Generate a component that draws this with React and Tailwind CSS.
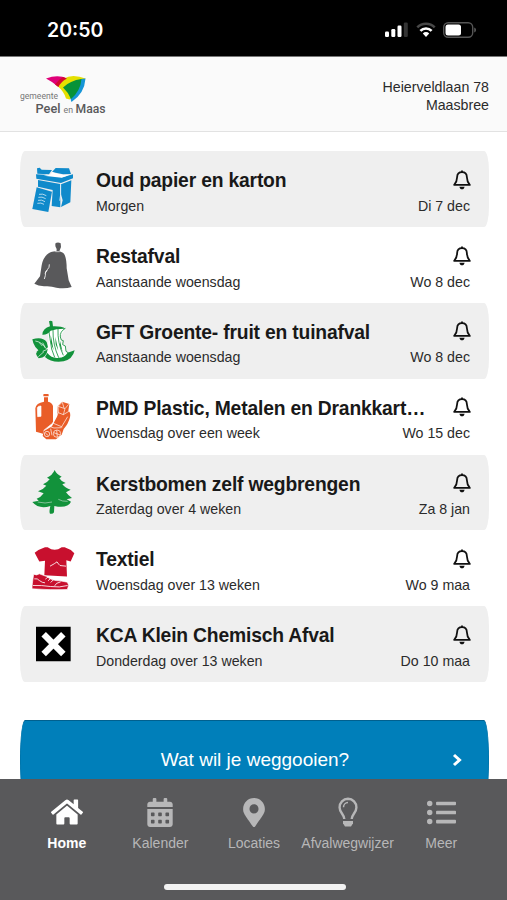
import { FaHome, FaCalendarAlt, FaMapMarkerAlt, FaListUl } from 'react-icons/fa';

function PaperIcon() {
  return (
    <svg viewBox="48 60 132 144" className="h-12 w-11">
      <g fill="#0f8acb">
        <path d="M66 70l8-2 6 6 31 1-9 13-35-2z" />
        <path d="M111 81l11-12 40 1 6 17-24 1z" />
        <path d="M63 88l26 1 52 8 33-9v12l-36 14-74-13z" />
        <path d="M69 105l67 12v70l-26-4 3-48-44-10z" />
        <path d="M138 118l31-12-3 66-28 14 5-20-5-18z" />
        <path d="M65 127l46 13-11 61-48-9z" />
      </g>
      <path d="M86 92l20-3 6-8 14 5 20 4 16 1-22 7z" fill="#fff" />
      <path
        d="M72 148q11-3 22 4M70 157q11-3 22 4M69 166q11-3 21 4M67 175q11-3 20 3M137 118v31l-3 18"
        fill="none"
        stroke="#fff"
        strokeWidth="2"
      />
    </svg>
  );
}

function BagIcon() {
  return (
    <svg viewBox="48 288 132 144" className="h-12 w-11">
      <path
        d="M122 294q8-4 15 1l1 11-5 13q13 3 17 13 5 13 5 38l6 36 9 20q-20 6-46 2-17-6-37-4-18-2-29-8l17-22 5-33q4-22 17-33 9-9 27-9 2-5 0-9-5-8-2-16z"
        fill="#59595b"
      />
      <path d="M121 320h13" fill="none" stroke="#fff" strokeWidth="2" />
      <path d="M103 358q1 10-6 16-8 4-6 18l-3 10M97 376l-7 9" fill="none" stroke="#fff" strokeWidth="2.5" />
    </svg>
  );
}

function AppleIcon() {
  return (
    <svg viewBox="48 51 132 144" className="h-12 w-11">
      <path d="M98 83l54 3-16 22 4 22 10 10 3 16 12 5-22 14h-30l-17-18 5-35z" fill="#fff" />
      <g fill="#12923b">
        <path d="M102 64q5-3 10 0l2 15q24-1 38 7-26-1-45 6-10 13-25 12 2-20 23-25z" />
        <path d="M52 118q30-9 43 8l4 16q-11 5-18 16-25-13-29-40z" />
        <path d="M63 161q9-23 35-14-2 26-27 28-5-5-8-14z" />
        <path d="M97 159q14 18 35 14 16 0 26-15l21-7q-6 27-33 33-37 5-56-13z" />
      </g>
      <g fill="none" stroke="#12923b" strokeWidth="2.5">
        <path d="M151 85q-17 10-15 26l3 9 6 2-2 12 8 4 2 16 8 5" />
        <path d="M102 96l3 20q3 34 14 56M114 90q-1 43 17 83M129 86q-2 43 16 80" />
      </g>
      <path d="M107 104l9 47-8-20zM121 110l9 42-8-19zM135 122l8 34-8-18z" fill="#12923b" />
      <path
        d="M61 123q20 3 31 22M70 170l17-15M73 128l9 10M83 128l8 15M97 148l-14 6"
        fill="none"
        stroke="#fff"
        strokeWidth="2"
      />
    </svg>
  );
}

function PlasticIcon() {
  return (
    <svg viewBox="48 279 132 144" className="h-12 w-11">
      <g fill="#e95d28">
        <rect x="85" y="282" width="16" height="7" rx="2" />
        <path d="M87 292h12v13q12 2 15 13v50l-28 24-2 9-21-6-2-70q2-16 26-20z" />
        <path d="M128 319l13-14 22 7-3 20q8 5 5 20-5 20-19 35l-6 17-17 14H94l-11-10 3-14 25-15 16-31z" />
      </g>
      <g fill="none" stroke="#fff" strokeWidth="2">
        <path d="M67 323q2-6 11-5v31l-10 1z" fill="#fff" />
        <path d="M113 369l17-31-1-19 14-14M129 319l21 7 11-13M150 326l-5 18-15-6M145 344l20-12M142 307l5 17M158 350l-18 30M113 369l29 12M86 391l28-22M103 379l14 5 23-1" />
        <circle cx="96" cy="402" r="8" />
        <circle cx="126" cy="401" r="11" />
        <path d="M125 391l2 21M116 398l20 7M91 399l9 8M107 386l4 20" />
      </g>
    </svg>
  );
}

function TreeIcon() {
  return (
    <svg viewBox="48 57 132 144" className="h-12 w-11">
      <path
        d="M119 63q5 12 21 20l-7 5q5 9 19 14l-10 4q9 12 25 16l-14 8q7 10 18 17l-16 4 13 7q-8 18-39 15l-11-2-1 19q-3 6-12 4-3-4 0-18l1-5q-34 11-54-12l19-4-6-6q13-4 21-16l-17-6q15-5 25-17l-10-4q12-4 20-15l-8-5q16-7 23-23z"
        fill="#12923b"
      />
      <path d="M68 159q23 6 43 0M130 151q12 7 28 6" fill="none" stroke="#efefef" strokeWidth="1.5" />
    </svg>
  );
}

function TextileIcon() {
  return (
    <svg viewBox="48 283.5 132 144" className="h-12 w-11">
      <g fill="#c8102e">
        <path d="M59 310q12-11 31-17h8q21 15 42 0h9q17 5 29 18l-11 25-13-4 2 49-68-4 2-43-17 2z" />
        <path d="M56 374q9 5 17-1l22 8q16 13 40 13l22 4 4 9-4 13q-50 2-106-2 0-12 5-44z" stroke="#fff" strokeWidth="2" />
      </g>
      <path
        d="M105 350q15-8 21-13 5 8 9 11l18 2M54 408q26-1 52 3 28 4 52-3M91 389l10-8M99 394l10-9M107 399l9-9M58 388q10-2 15 5 9 7 17 7M119 409q3-9 18-12"
        fill="none"
        stroke="#fff"
        strokeWidth="2.5"
      />
    </svg>
  );
}

function ChemicalIcon() {
  return (
    <svg viewBox="48 61 132 144" className="h-12 w-11">
      <path d="M63 81h104v104H63z" />
      <path d="M86 104l59 59M145 104l-59 59" stroke="#fff" strokeWidth="19" />
    </svg>
  );
}

function BellIcon() {
  return (
    <svg
      viewBox="0 0 18 20"
      className="mb-0.5 h-5 w-[18px]"
      fill="none"
      stroke="#111"
      strokeWidth="1.8"
      strokeLinejoin="round"
    >
      <path d="M9 2.2c-3.2 0-4.8 2.1-4.9 5-.1 3.4-.9 5.500-2.900 7.700h15.600c-2-2.200-2.800-4.300-2.900-7.700-.1-2.900-1.700-5-4.900-5z" />
      <path d="M9 .6v2" />
      <path d="M6.400 16.700h5.200c-.3 1.700-1.300 2.600-2.600 2.600s-2.300-.9-2.600-2.600z" fill="#111" stroke="none" />
    </svg>
  );
}

function BulbIcon() {
  return (
    <svg viewBox="0 0 20 30" className="h-[30px] w-5" fill="none" stroke="currentColor" strokeWidth="2.4">
      <path d="M6.3 22c0-4.500-4.700-6.200-4.700-11.600A8.500 8.500 0 0 1 10 1.700a8.500 8.500 0 0 1 8.400 8.700c0 5.400-4.700 7.100-4.700 11.600" />
      <path d="M5.500 10.200A4.700 4.700 0 0 1 10 5.500" strokeWidth="1.500" />
      <path d="M5 24h10v2.300l-2 3.200H7l-2-3.200z" fill="currentColor" stroke="none" />
    </svg>
  );
}

function Logo() {
  return (
    <svg viewBox="0 0 90 42" className="h-[42px] w-[90px]" fontFamily="Roboto, 'Liberation Sans', sans-serif">
      <path d="M26 4.500q12-4.500 21 0-6 3-8.500 8.500Q33 8 26 4.500z" fill="#df0078" />
      <path d="M37.500 12q5-10 16-10 6 0 12 2.500-6 15-16 21l-3.500-1q-2-7-8.500-12.500z" fill="#e5e000" />
      <path d="M38.500 13q2-5 8.500-8.500l-4-1.500q-5 3-8 7.500z" fill="#d20a2e" />
      <path d="M61 5l4.500-.5q-1 15-14 23.500-1-2-1-5 8-7 10.500-18z" fill="#1695d7" />
      <path d="M43 13.500q7-7 18.500-8.500-1 12-10.500 20-3-7-8-11.500z" fill="#079238" />
      <text x="0" y="25" fontSize="8.5" fill="#777" textLength="38" lengthAdjust="spacingAndGlyphs">gemeente</text>
      <text x="15.5" y="38.5" fontSize="12" fontWeight="500" fill="#59595b" textLength="25" lengthAdjust="spacingAndGlyphs">Peel</text>
      <text x="43.5" y="38.5" fontSize="8.5" fill="#777" textLength="9.5" lengthAdjust="spacingAndGlyphs">en</text>
      <text x="55.5" y="38.5" fontSize="12" fontWeight="500" fill="#59595b" textLength="30" lengthAdjust="spacingAndGlyphs">Maas</text>
    </svg>
  );
}

function StatusIcons() {
  return (
    <svg viewBox="0 0 94 18" className="h-[18px] w-[94px]">
      <g fill="#fff">
        <rect x="2" y="10.5" width="4" height="5.5" rx="1.2" />
        <rect x="8.3" y="8" width="4" height="8" rx="1.2" />
        <rect x="14.5" y="4.5" width="4" height="11.5" rx="1.2" />
      </g>
      <rect x="20.8" y="1.5" width="4" height="14.5" rx="1.2" fill="#333" />
      <g fill="none" strokeWidth="2.6">
        <path d="M34.3 6.4a12.3 12.3 0 0 1 17.4 0" stroke="#484848" />
        <path d="M37.4 9.8a7.8 7.8 0 0 1 11.2 0" stroke="#fff" />
      </g>
      <path d="M43 16l-3.2-3.6a4.6 4.6 0 0 1 6.4 0z" fill="#fff" />
      <rect x="60.7" y="1.7" width="29" height="14.6" rx="4.5" fill="none" stroke="#555" strokeWidth="1.4" />
      <rect x="62.5" y="3.5" width="15.5" height="11" rx="2.5" fill="#fff" />
      <path d="M91.2 6.500c2.500.8 2.500 4.200 0 5z" fill="#555" />
    </svg>
  );
}

const pickups = [
  { title: 'Oud papier en karton', when: 'Morgen', date: 'Di 7 dec', Icon: PaperIcon },
  { title: 'Restafval', when: 'Aanstaande woensdag', date: 'Wo 8 dec', Icon: BagIcon },
  { title: 'GFT Groente- fruit en tuinafval', when: 'Aanstaande woensdag', date: 'Wo 8 dec', Icon: AppleIcon },
  { title: 'PMD Plastic, Metalen en Drankkart…', when: 'Woensdag over een week', date: 'Wo 15 dec', Icon: PlasticIcon },
  { title: 'Kerstbomen zelf wegbrengen', when: 'Zaterdag over 4 weken', date: 'Za 8 jan', Icon: TreeIcon },
  { title: 'Textiel', when: 'Woensdag over 13 weken', date: 'Wo 9 maa', Icon: TextileIcon },
  { title: 'KCA Klein Chemisch Afval', when: 'Donderdag over 13 weken', date: 'Do 10 maa', Icon: ChemicalIcon },
];

const tabs = [
  { label: 'Home', icon: <FaHome className="h-8 w-8" />, active: true },
  { label: 'Kalender', icon: <FaCalendarAlt className="h-[29px] w-[26px]" /> },
  { label: 'Locaties', icon: <FaMapMarkerAlt className="h-[29px] w-[22px]" /> },
  { label: 'Afvalwegwijzer', icon: <BulbIcon /> },
  { label: 'Meer', icon: <FaListUl className="h-[29px] w-[29px]" /> },
];

function PickupRow({ item, shaded }) {
  const { title, when, date, Icon } = item;
  return (
    <li
      className={`flex h-[75.8px] rounded-[5px/20px] pl-[11px] pr-[18px] ${shaded ? 'bg-[#efefef]' : 'bg-white'}`}
    >
      <div className="flex w-[65px] shrink-0 items-center">
        <Icon />
      </div>
      <div className="min-w-0 flex-1 pt-[17.5px]">
        <div className="flex h-6 items-center justify-between">
          <h2 className="whitespace-nowrap pt-px text-[19.3px] font-bold leading-6 tracking-[-0.18px] text-[#191919]">
            {title}
          </h2>
          <BellIcon />
        </div>
        <div className="mt-[3px] flex justify-between text-[14.2px] leading-5 text-[#2b2b2b]">
          <span>{when}</span>
          <span className="mr-px">{date}</span>
        </div>
      </div>
    </li>
  );
}

export default function App() {
  return (
    <div className="flex h-[900px] w-[507px] flex-col overflow-hidden bg-white font-['Liberation_Sans',Arial,sans-serif]">
      <div className="flex h-[57px] shrink-0 justify-between border-b border-[#777] bg-black pl-[47px] pr-[30px] pt-[18px] text-white">
        <span className="font-[Inter,sans-serif] text-[19.5px] font-semibold leading-6">20:50</span>
        <div className="pt-[3px]">
          <StatusIcons />
        </div>
      </div>

      <header className="flex h-[75px] shrink-0 justify-between border-b border-[#e2e2e2] bg-[#fafafa] pl-5 pr-[18px] pt-[17px]">
        <Logo />
        <p className="pt-1 text-right text-[14.2px] leading-[18px] text-[#2b2b2b]">
          Heierveldlaan 78
          <br />
          Maasbree
        </p>
      </header>

      <main className="min-h-0 flex-1 overflow-hidden pl-5 pr-[18px] pt-[19.4px]">
        <ul>
          {pickups.map((item, i) => (
            <PickupRow key={item.title} item={item} shaded={i % 2 === 0} />
          ))}
        </ul>
        <button
          type="button"
          className="mt-[38px] flex h-20 w-full items-center rounded-[5px/38px] border border-x-[#0076ad] border-y-[#00608f] bg-[#007fba] pl-[37px] pr-[26px] text-[19px] text-white"
        >
          <span className="flex-1 text-center">Wat wil je weggooien?</span>
          <svg viewBox="0 0 10 14" className="h-3.5 w-2.5" fill="none" stroke="#fff" strokeWidth="3">
            <path d="M2 2l5.5 5L2 12" />
          </svg>
        </button>
      </main>

      <nav className="flex h-[121px] shrink-0 flex-col items-center bg-[#59595b]">
        <div className="grid w-full grid-cols-5 pl-5 pr-[19px] pt-[18px]">
          {tabs.map((tab) => (
            <div
              key={tab.label}
              className={`flex flex-col items-center text-[14px] leading-5 ${tab.active ? 'font-bold text-white' : 'text-[#b7b7b8]'}`}
            >
              <div className="flex h-[30px] items-center">{tab.icon}</div>
              <span className="mt-1.5">{tab.label}</span>
            </div>
          ))}
        </div>
        <div className="ml-0.5 mt-[31px] h-[6px] w-[182px] rounded-full bg-[#f2f2f2]" />
      </nav>
    </div>
  );
}
